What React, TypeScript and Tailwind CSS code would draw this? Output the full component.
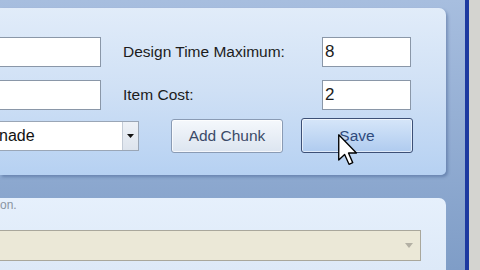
import React from 'react';

const font = { fontFamily: '"Liberation Sans", Arial, sans-serif' };

export default function App() {
  return (
    <div className="flex w-[480px] h-[270px] overflow-hidden bg-[#8ba8d0] relative" style={font}>
      {/* main form area */}
      <div className="w-[465px] flex flex-col bg-gradient-to-b from-[#a7bedf] to-[#7f9dc7]">
        {/* top settings panel */}
        <div className="mt-[8px] w-[446px] h-[167px] rounded-tr-[7px] rounded-br-[5px] bg-gradient-to-b from-[#e1ecf9] via-[#cfe0f5] to-[#b6d1f2] shadow-[2px_2px_3px_rgba(40,70,120,0.35)] flex flex-col pt-[29px]">
          {/* row 1 */}
          <div className="flex items-center h-[30px]">
            <div className="w-[101px] h-[30px] bg-white border border-l-0 border-[#8a97a8]" />
            <span className="ml-[22px] w-[199px] text-[15.5px] text-[#1c1c1c]">Design Time Maximum:</span>
            <div className="w-[89px] h-[30px] bg-white border border-[#8a97a8] flex items-center pl-[2px] text-[17px] text-[#1c1c1c]">8</div>
          </div>
          {/* row 2 */}
          <div className="flex items-center h-[30px] mt-[13px]">
            <div className="w-[101px] h-[30px] bg-white border border-l-0 border-[#8a97a8]" />
            <span className="ml-[22px] w-[199px] text-[15.5px] text-[#1c1c1c]">Item Cost:</span>
            <div className="w-[89px] h-[30px] bg-white border border-[#8a97a8] flex items-center pl-[2px] text-[17px] text-[#1c1c1c]">2</div>
          </div>
          {/* row 3 */}
          <div className="flex items-center h-[35px] mt-[8px]">
            <div className="w-[139px] h-[30px] bg-white border border-l-0 border-[#9aa6b6] flex items-stretch">
              <span className="flex-1 flex items-center text-[16px] text-[#111] -ml-[1px]">nade</span>
              <div className="w-[16px] bg-gradient-to-b from-[#eef2f7] to-[#dde4ed] border-l border-[#c3cbd6] flex items-center justify-center">
                <svg width="7" height="4" viewBox="0 0 7 4"><path d="M0 0h7L3.5 4z" fill="#111" /></svg>
              </div>
            </div>
            <button className="ml-[32px] w-[112px] h-[34px] rounded-[3px] border border-[#8a9bb4] bg-gradient-to-b from-[#f5f8fc] to-[#dce5f0] text-[15.5px] text-[#3b4a68] shadow-[inset_0_0_0_1px_rgba(255,255,255,0.7)]">
              Add Chunk
            </button>
            <button className="ml-[18px] w-[112px] h-[35px] rounded-[3px] border border-[#3d5076] bg-gradient-to-b from-[#d6e6f9] to-[#afcbef] text-[15.5px] text-[#2f4a7c] shadow-[inset_0_0_0_1px_rgba(255,255,255,0.6)]">
              Save
            </button>
          </div>
        </div>

        {/* lower group panel */}
        <div className="mt-[23px] w-[446px] flex-1 rounded-tr-[7px] overflow-hidden bg-gradient-to-b from-[#e6f0fc] to-[#dde9f8] flex flex-col">
          <span className="mt-[1px] h-[12px] text-[12px] text-[#8a94a2] leading-none">on.</span>
          <div className="mt-[19px] w-[421px] h-[31px] bg-[#ebe8d7] border border-l-0 border-[#a9a79c] flex items-center justify-end pr-[7px]">
            <svg width="8" height="5" viewBox="0 0 8 5"><path d="M0 0h8L4 5z" fill="#b3b0a4" /></svg>
          </div>
        </div>
      </div>

      {/* window edge */}
      <div className="w-[4px] h-full bg-[#1d3aa0]" />
      <div className="flex-1 h-full bg-[#d4d4d0]" />

      {/* mouse cursor */}
      <svg className="absolute left-[336px] top-[134px]" width="24" height="32" viewBox="0 0 12 19">
        <path d="M0.5 0.5 L0.5 15.5 L4 12.2 L6.6 18 L8.8 17 L6.3 11.3 L11 11.3 Z" fill="#fff" stroke="#000" strokeWidth="0.8" strokeLinejoin="round" />
      </svg>
    </div>
  );
}
